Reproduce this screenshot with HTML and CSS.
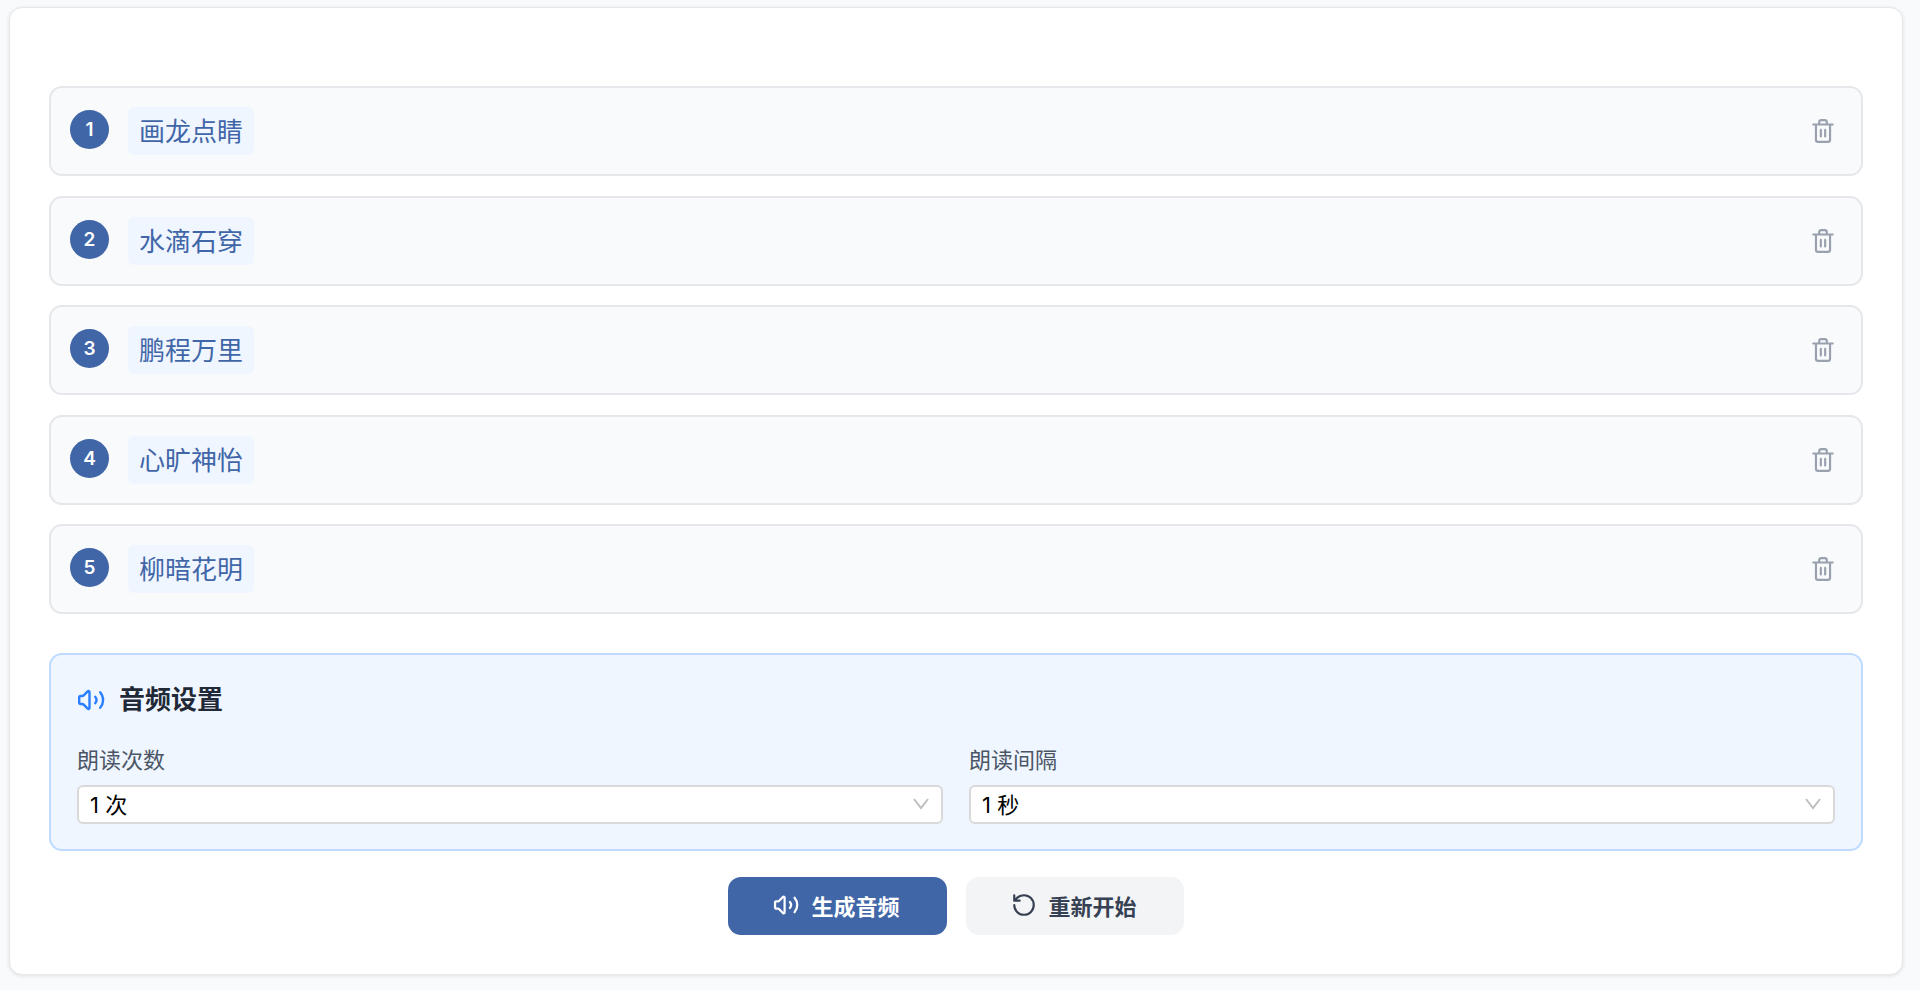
FILE: index.html
```html
<!DOCTYPE html>
<html lang="zh-CN">
<head>
  <meta charset="UTF-8">
  <meta name="viewport" content="width=device-width, initial-scale=1.0">
  <title>成语听写</title>
  <link rel="stylesheet" href="styles.css">
</head>
<body>
  <!-- 公用图标 -->
  <svg class="sprite" aria-hidden="true">
    <symbol id="icon-trash" viewBox="0 0 24 24">
      <path d="M3 6h18M18.5 6v14a2 2 0 0 1-2 2h-9a2 2 0 0 1-2-2V6M8.5 6V4a2 2 0 0 1 2-2h3a2 2 0 0 1 2 2v2M10 11v6M14 11v6"/>
    </symbol>
    <symbol id="icon-volume" viewBox="0 0 28 28">
      <path d="M2.2 11.2a1.2 1.2 0 0 1 1.2-1.2h1.9q.8 0 1.4-.6l4-4.1a1.1 1.1 0 0 1 1.8.8v15.8a1.1 1.1 0 0 1-1.8.8l-4-4.1q-.6-.6-1.4-.6H3.4a1.2 1.2 0 0 1-1.2-1.2zM18.2 10.8a5 5 0 0 1 0 6.4M23.2 6.2a12 12 0 0 1 0 15.6"/>
    </symbol>
    <symbol id="icon-restart" viewBox="0 0 24 24">
      <path d="M3 12a9 9 0 1 0 9-9 9.75 9.75 0 0 0-6.74 2.74L3 8M3 3v5h5"/>
    </symbol>
  </svg>

  <main class="card">
    <!-- 词语列表 -->
    <ol class="word-list">
      <li class="word-item">
        <span class="word-number">1</span>
        <span class="word-text">画龙点睛</span>
        <button type="button" class="delete-button" aria-label="删除"><svg class="icon"><use href="#icon-trash"/></svg></button>
      </li>
      <li class="word-item">
        <span class="word-number">2</span>
        <span class="word-text">水滴石穿</span>
        <button type="button" class="delete-button" aria-label="删除"><svg class="icon"><use href="#icon-trash"/></svg></button>
      </li>
      <li class="word-item">
        <span class="word-number">3</span>
        <span class="word-text">鹏程万里</span>
        <button type="button" class="delete-button" aria-label="删除"><svg class="icon"><use href="#icon-trash"/></svg></button>
      </li>
      <li class="word-item">
        <span class="word-number">4</span>
        <span class="word-text">心旷神怡</span>
        <button type="button" class="delete-button" aria-label="删除"><svg class="icon"><use href="#icon-trash"/></svg></button>
      </li>
      <li class="word-item">
        <span class="word-number">5</span>
        <span class="word-text">柳暗花明</span>
        <button type="button" class="delete-button" aria-label="删除"><svg class="icon"><use href="#icon-trash"/></svg></button>
      </li>
    </ol>

    <!-- 音频设置 -->
    <section class="settings">
      <h2 class="settings-title"><svg class="icon icon-large"><use href="#icon-volume"/></svg>音频设置</h2>
      <div class="settings-fields">
        <div class="field">
          <label for="repeat">朗读次数</label>
          <div class="select-box">
            <select id="repeat">
              <option value="1">1 次</option>
              <option value="2">2 次</option>
              <option value="3">3 次</option>
            </select>
            <svg class="select-arrow" viewBox="0 0 16 12"><path d="M1 1l7 9 7-9"/></svg>
          </div>
        </div>
        <div class="field">
          <label for="interval">朗读间隔</label>
          <div class="select-box">
            <select id="interval">
              <option value="1">1 秒</option>
              <option value="2">2 秒</option>
              <option value="3">3 秒</option>
            </select>
            <svg class="select-arrow" viewBox="0 0 16 12"><path d="M1 1l7 9 7-9"/></svg>
          </div>
        </div>
      </div>
    </section>

    <div class="actions">
      <button type="button" class="button button-primary"><svg class="icon icon-volume"><use href="#icon-volume"/></svg>生成音频</button>
      <button type="button" class="button button-secondary"><svg class="icon"><use href="#icon-restart"/></svg>重新开始</button>
    </div>
  </main>
</body>
</html>
```
FILE: styles.css
```css
* {
  box-sizing: border-box;
}
body {
  margin: 0;
  min-height: 100vh;
  padding: 7px 17px 15px 9px;
  display: flex;
  background-color: #f9fafb;
  font-family: Inter, "Noto Sans CJK SC", sans-serif;
  color: #1f2937;
}
.sprite {
  display: none;
}
.icon {
  width: 26px;
  height: 26px;
  flex-shrink: 0;
  overflow: visible;
  fill: none;
  stroke: currentColor;
  stroke-width: 2;
  stroke-linecap: round;
  stroke-linejoin: round;
}
.icon-large {
  width: 28px;
  height: 28px;
  color: #2b7fff;
}
.icon-large,
.icon-volume {
  stroke-width: 2.4;
}
.card {
  flex: 1;
  display: flex;
  flex-direction: column;
  padding: 78px 39px 39px;
  background-color: #fff;
  border: 1px solid #e5e7eb;
  border-radius: 13px;
  box-shadow: 0 1px 4px rgba(0, 0, 0, 0.1);
}

/* 词语列表 */
.word-list {
  flex: 1;
  display: flex;
  flex-direction: column;
  justify-content: space-between;
  gap: 16px;
  margin: 0 0 39px;
  padding: 0;
  list-style: none;
}
.word-item {
  display: flex;
  align-items: flex-start;
  gap: 19px;
  padding: 19px;
  background-color: #f9fafb;
  border: 2px solid #e5e7eb;
  border-radius: 13px;
}
.word-number {
  display: flex;
  align-items: center;
  justify-content: center;
  width: 39px;
  height: 39px;
  margin-top: 3px;
  border-radius: 50%;
  background-color: #4166a8;
  color: #fff;
  font-size: 19px;
  font-weight: 600;
}
.word-text {
  padding: 1px 11px 0;
  border-radius: 6px;
  background-color: #eff6ff;
  color: #4166a8;
  font-size: 26px;
  line-height: 47px;
}
.delete-button {
  display: flex;
  align-self: center;
  margin-left: auto;
  padding: 6px;
  border: 0;
  background: none;
  color: #99a1af;
  cursor: pointer;
}

/* 音频设置 */
.settings {
  padding: 26px 26px 25px;
  background-color: #eff6ff;
  border: 2px solid #bedbff;
  border-radius: 13px;
}
.settings-title {
  display: flex;
  align-items: center;
  gap: 14px;
  margin: 0 0 22px;
  font-size: 26px;
  font-weight: 600;
  line-height: 38px;
}
.settings-fields {
  display: grid;
  grid-template-columns: 1fr 1fr;
  gap: 26px;
}
.field label {
  display: block;
  margin-bottom: 6px;
  color: #4a5565;
  font-size: 22px;
  line-height: 38px;
}
.select-box {
  position: relative;
}
.select-box select {
  display: block;
  width: 100%;
  height: 39px;
  padding: 0 11px;
  appearance: none;
  border: 2px solid #d9d9d9;
  border-radius: 6px;
  background-color: #fff;
  color: #000;
  font-family: inherit;
  font-size: 22px;
}
.select-arrow {
  position: absolute;
  top: 13px;
  right: 14px;
  width: 16px;
  height: 12px;
  fill: none;
  stroke: #bfbfbf;
  stroke-width: 2;
  pointer-events: none;
}

/* 操作按钮 */
.actions {
  display: flex;
  justify-content: center;
  gap: 19px;
  margin-top: 26px;
}
.button {
  display: flex;
  align-items: center;
  gap: 12px;
  height: 58px;
  padding: 0 47px 2px 45px;
  border: 0;
  border-radius: 13px;
  font-family: inherit;
  font-size: 22px;
  font-weight: 600;
  cursor: pointer;
}
.button-primary {
  background-color: #4166a8;
  color: #fff;
}
.button-secondary {
  background-color: #f3f4f6;
  color: #364153;
}
```
